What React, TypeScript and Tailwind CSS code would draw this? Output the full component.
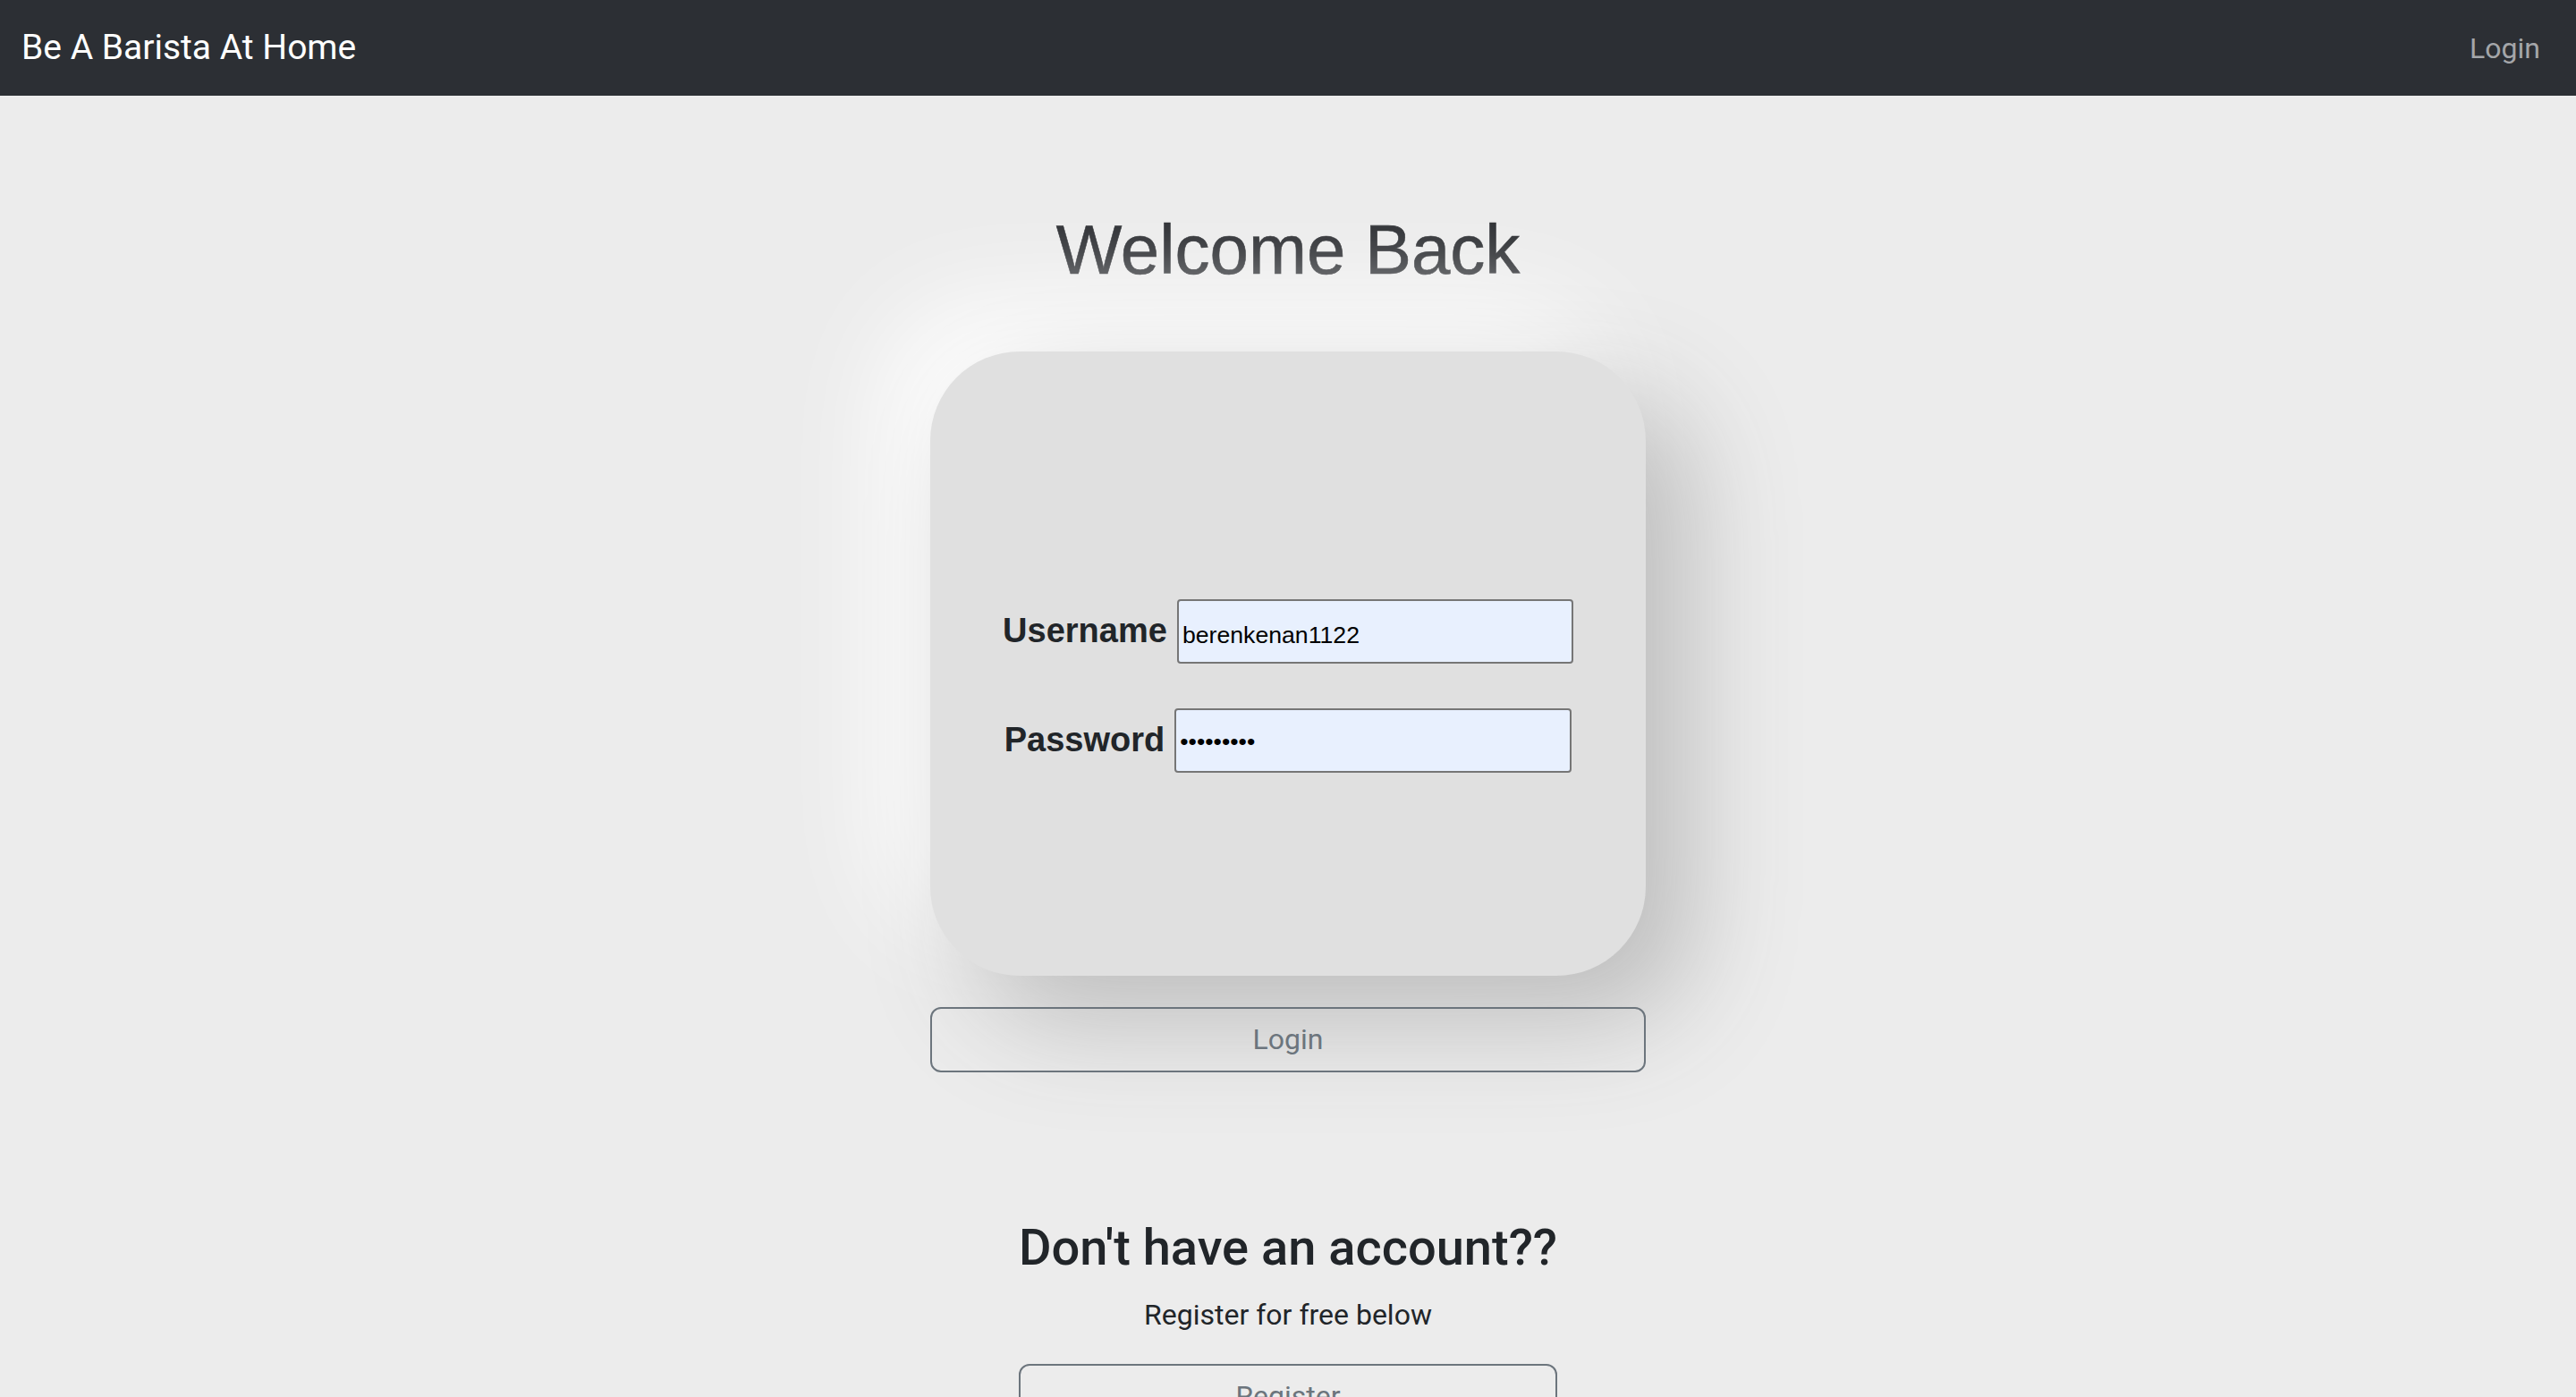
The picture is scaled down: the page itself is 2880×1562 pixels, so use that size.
export default function App() {
  const sys = { fontFamily: 'Roboto, "Noto Sans", sans-serif' };
  const helv = { fontFamily: '"Liberation Sans", Arial, sans-serif' };

  return (
    <div className="min-h-screen bg-[#ececec] overflow-hidden" style={sys}>
      {/* Navbar */}
      <nav className="h-[107px] bg-[#2c2f34] flex items-center justify-between pl-[24px] pr-[40px]">
        <span className="text-[39px] text-white leading-none">Be A Barista At Home</span>
        <span className="text-[32px] text-[#a4a6a9] leading-none">Login</span>
      </nav>

      <main className="flex flex-col items-center pt-[126px]">
        <h1 className="text-[78px] leading-[1.2] m-0 text-[#2a2c30] [-webkit-text-stroke:0.6px_#2a2c30]" style={helv}>
          Welcome Back
        </h1>

        {/* Card */}
        <div
          className="mt-[66px] w-[800px] h-[698px] rounded-[100px] bg-[#e0e0e0] shadow-[50px_50px_120px_#bdbdbd,-50px_-50px_120px_#ffffff] flex flex-col items-center pt-[277px] gap-[50px]"
          style={helv}
        >
          <div className="flex items-center gap-[11px]">
            <label className="text-[38px] font-bold text-[#212529]">Username</label>
            <input
              type="text"
              readOnly
              value="berenkenan1122"
              className="w-[443px] h-[72px] bg-[#e8f0fe] border-2 border-[#767676] rounded-[4px] px-[4px] pt-[10px] text-[26.67px] text-black outline-none"
              style={helv}
            />
          </div>
          <div className="flex items-center gap-[11px]">
            <label className="text-[38px] font-bold text-[#212529]">Password</label>
            <input
              type="password"
              readOnly
              value="123456789"
              className="w-[444px] h-[72px] bg-[#e8f0fe] border-2 border-[#767676] rounded-[4px] px-[4px] pt-[4px] text-[26.67px] text-black outline-none"
              style={helv}
            />
          </div>
        </div>

        <button className="mt-[35px] w-[800px] h-[73px] border-2 border-[#6c757d] rounded-[12px] bg-transparent text-[32px] text-[#6c757d]">
          Login
        </button>

        {/* Register */}
        <div className="mt-[163px] flex flex-col items-stretch">
          <h2 className="text-[56px] font-medium leading-[1.2] text-[#212529] text-center">
            Don't have an account??
          </h2>
          <p className="mt-[17px] text-[32px] leading-[1.5] text-[#212529] text-center">
            Register for free below
          </p>
          <button className="mt-[31px] w-full h-[73px] border-2 border-[#6c757d] rounded-[12px] bg-transparent text-[32px] text-[#6c757d]">
            Register
          </button>
        </div>
      </main>
    </div>
  );
}
